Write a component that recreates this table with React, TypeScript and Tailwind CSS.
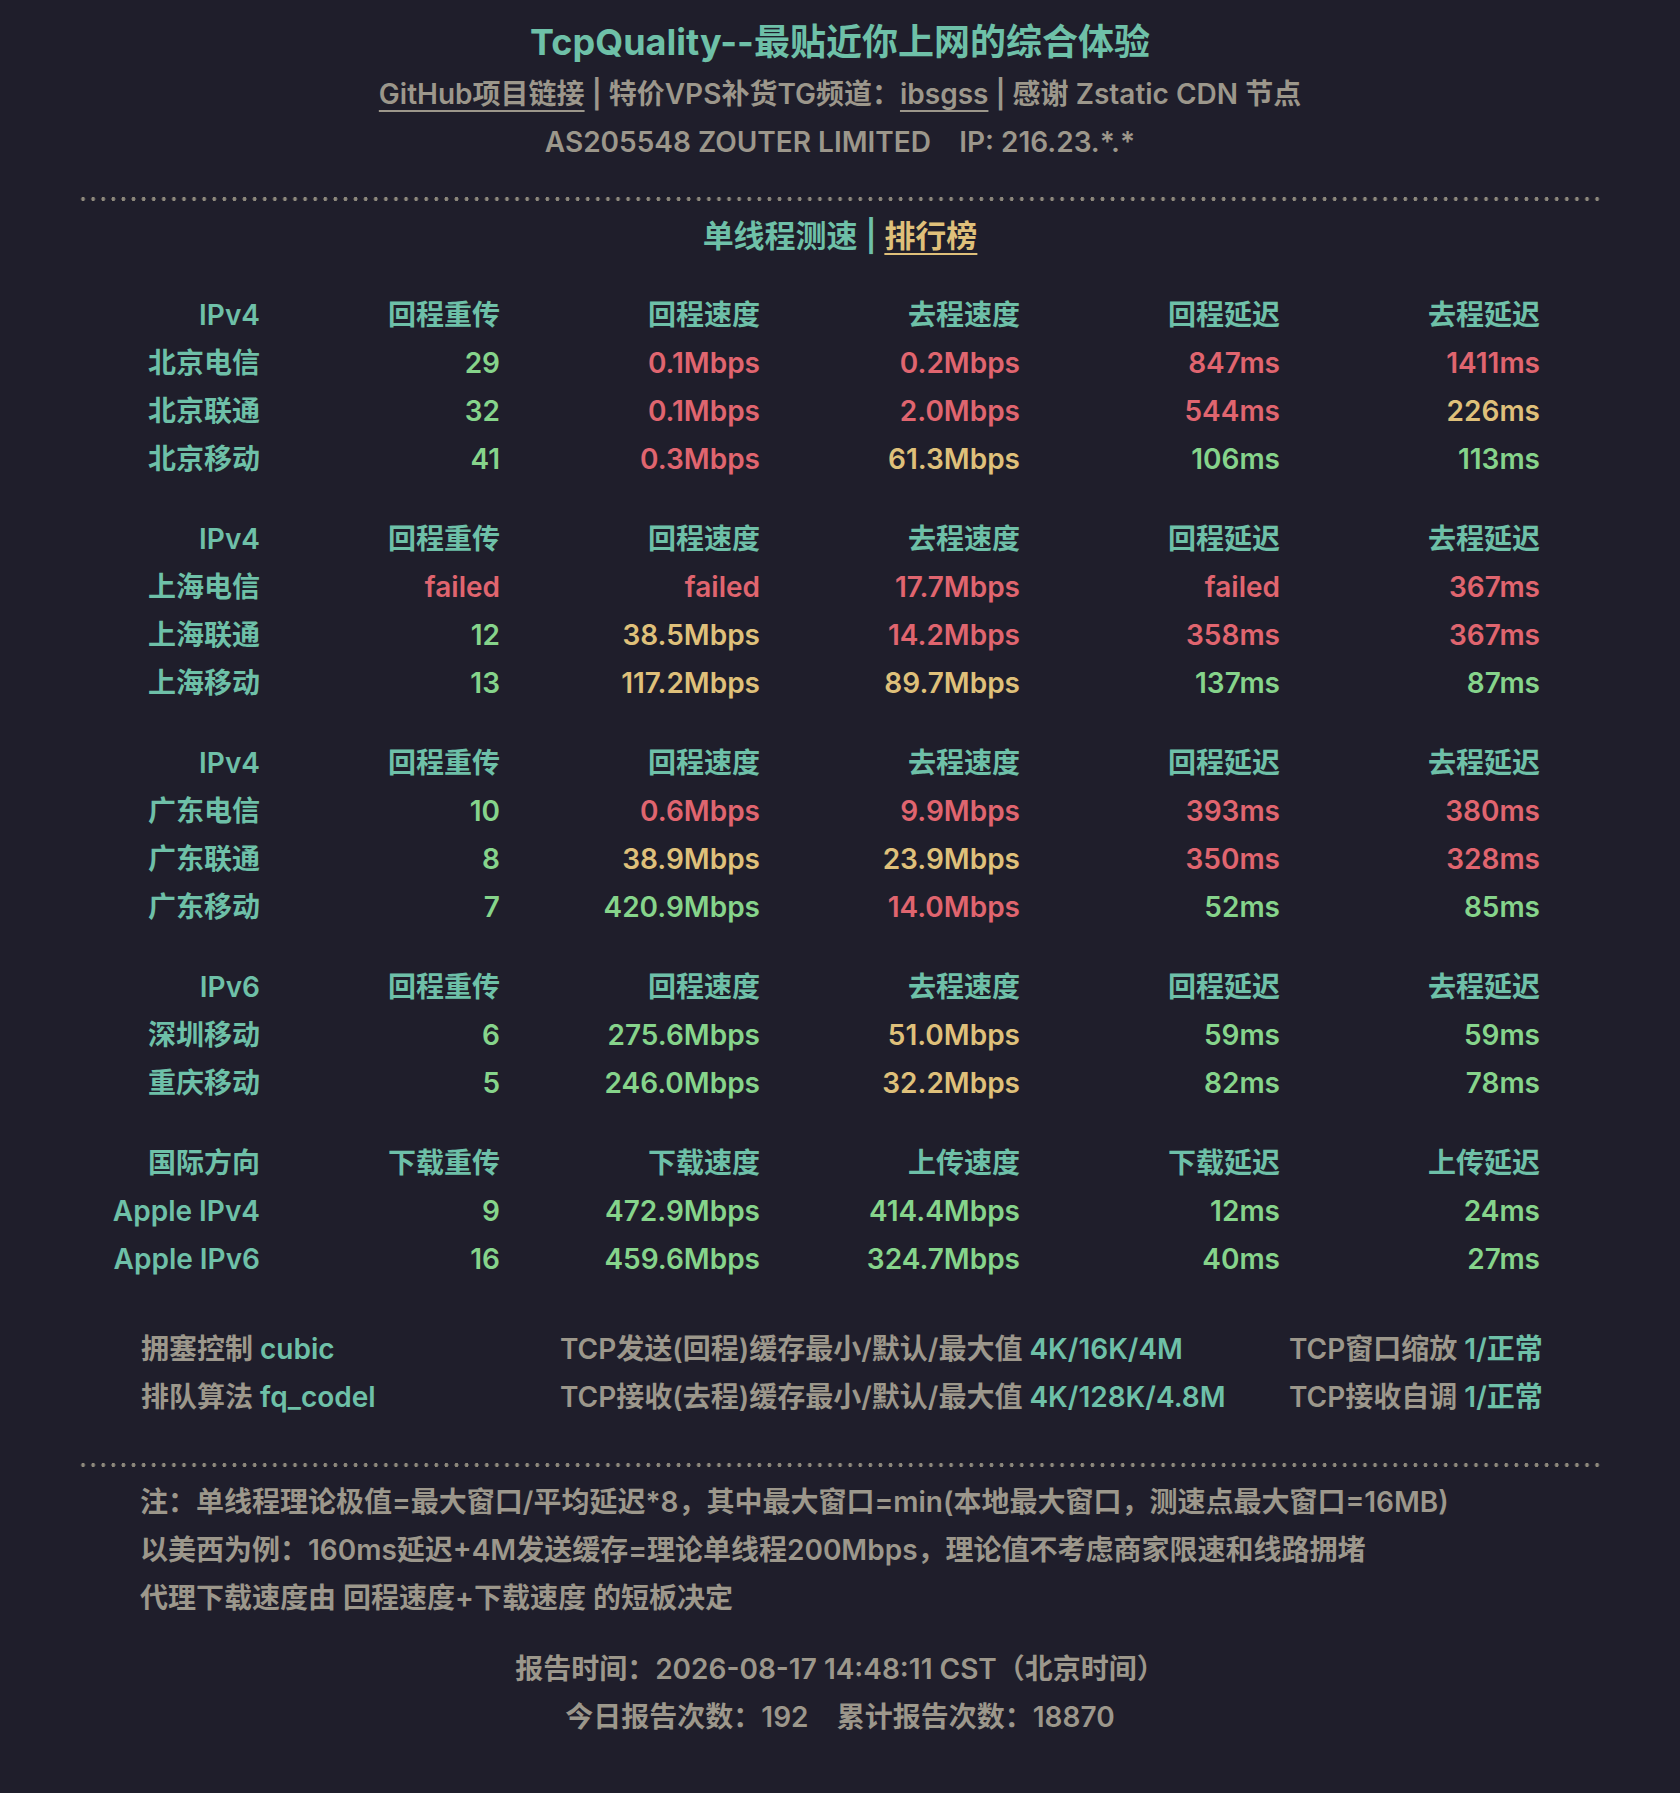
import React from 'react'

type Tone = 'g' | 'r' | 'y'

const tone: Record<Tone, string> = {
  g: 'text-[#86d48b]',
  r: 'text-[#e0656f]',
  y: 'text-[#dfc07a]',
}

type Row = { name: string; cells: [string, Tone][] }
type Group = { head: string[]; rows: Row[] }

const groups: Group[] = [
  {
    head: ['IPv4', '回程重传', '回程速度', '去程速度', '回程延迟', '去程延迟'],
    rows: [
      { name: '北京电信', cells: [['29', 'g'], ['0.1Mbps', 'r'], ['0.2Mbps', 'r'], ['847ms', 'r'], ['1411ms', 'r']] },
      { name: '北京联通', cells: [['32', 'g'], ['0.1Mbps', 'r'], ['2.0Mbps', 'r'], ['544ms', 'r'], ['226ms', 'y']] },
      { name: '北京移动', cells: [['41', 'g'], ['0.3Mbps', 'r'], ['61.3Mbps', 'y'], ['106ms', 'g'], ['113ms', 'g']] },
    ],
  },
  {
    head: ['IPv4', '回程重传', '回程速度', '去程速度', '回程延迟', '去程延迟'],
    rows: [
      { name: '上海电信', cells: [['failed', 'r'], ['failed', 'r'], ['17.7Mbps', 'r'], ['failed', 'r'], ['367ms', 'r']] },
      { name: '上海联通', cells: [['12', 'g'], ['38.5Mbps', 'y'], ['14.2Mbps', 'r'], ['358ms', 'r'], ['367ms', 'r']] },
      { name: '上海移动', cells: [['13', 'g'], ['117.2Mbps', 'y'], ['89.7Mbps', 'y'], ['137ms', 'g'], ['87ms', 'g']] },
    ],
  },
  {
    head: ['IPv4', '回程重传', '回程速度', '去程速度', '回程延迟', '去程延迟'],
    rows: [
      { name: '广东电信', cells: [['10', 'g'], ['0.6Mbps', 'r'], ['9.9Mbps', 'r'], ['393ms', 'r'], ['380ms', 'r']] },
      { name: '广东联通', cells: [['8', 'g'], ['38.9Mbps', 'y'], ['23.9Mbps', 'y'], ['350ms', 'r'], ['328ms', 'r']] },
      { name: '广东移动', cells: [['7', 'g'], ['420.9Mbps', 'g'], ['14.0Mbps', 'r'], ['52ms', 'g'], ['85ms', 'g']] },
    ],
  },
  {
    head: ['IPv6', '回程重传', '回程速度', '去程速度', '回程延迟', '去程延迟'],
    rows: [
      { name: '深圳移动', cells: [['6', 'g'], ['275.6Mbps', 'g'], ['51.0Mbps', 'y'], ['59ms', 'g'], ['59ms', 'g']] },
      { name: '重庆移动', cells: [['5', 'g'], ['246.0Mbps', 'g'], ['32.2Mbps', 'y'], ['82ms', 'g'], ['78ms', 'g']] },
    ],
  },
  {
    head: ['国际方向', '下载重传', '下载速度', '上传速度', '下载延迟', '上传延迟'],
    rows: [
      { name: 'Apple IPv4', cells: [['9', 'g'], ['472.9Mbps', 'g'], ['414.4Mbps', 'g'], ['12ms', 'g'], ['24ms', 'g']] },
      { name: 'Apple IPv6', cells: [['16', 'g'], ['459.6Mbps', 'g'], ['324.7Mbps', 'g'], ['40ms', 'g'], ['27ms', 'g']] },
    ],
  },
]

const cols = 'grid grid-cols-[260px_240px_260px_260px_260px_260px]'

function Dots() {
  return (
    <div className="mx-auto h-[4px] w-[1524px] bg-[radial-gradient(circle,#8d887c_1.8px,transparent_2px)] bg-[length:10.1px_4px]" />
  )
}

export default function App() {
  return (
    <div className="min-h-[1793px] w-[1680px] bg-[#1f1e2b] font-['Inter','Noto_Sans_CJK_SC',sans-serif] text-[28px] font-semibold leading-[48px] text-[#9c978b]">
      <div className="pt-[17px] text-center">
        <h1 className="text-[36px] font-bold leading-[50px] text-[#6ec0a8]">TcpQuality--最贴近你上网的综合体验</h1>
        <div className="mt-[3px]">
          <span className="underline decoration-2 underline-offset-[6px]">GitHub项目链接</span>
          <span> | 特价VPS补货TG频道：</span>
          <span className="underline decoration-2 underline-offset-[6px]">ibsgss</span>
          <span> | 感谢 Zstatic CDN 节点</span>
        </div>
        <div>AS205548 ZOUTER LIMITED&nbsp;&nbsp;&nbsp; IP: 216.23.*.*</div>
      </div>

      <div className="mt-[31px]">
        <Dots />
      </div>

      <div className="mt-[11px] text-center text-[31px]">
        <span className="text-[#6ec0a8]">单线程测速 | </span>
        <span className="text-[#dfc07a] underline decoration-2 underline-offset-[6px]">排行榜</span>
      </div>

      <div className="mt-[31px] flex flex-col gap-[32px]">
        {groups.map((g, gi) => (
          <div key={gi}>
            <div className={`${cols} text-right text-[#6ec0a8]`}>
              {g.head.map((h, i) => (
                <div key={i}>{h}</div>
              ))}
            </div>
            {g.rows.map((r) => (
              <div key={r.name} className={`${cols} text-right`}>
                <div className="text-[#6ec0a8]">{r.name}</div>
                {r.cells.map(([v, t], i) => (
                  <div key={i} className={tone[t]}>{v}</div>
                ))}
              </div>
            ))}
          </div>
        ))}
      </div>

      <div className="mt-[42px] grid grid-cols-[419px_729px_auto] pl-[141px]">
        <div>拥塞控制 <span className="text-[#6ec0a8]">cubic</span></div>
        <div>TCP发送(回程)缓存最小/默认/最大值 <span className="text-[#6ec0a8]">4K/16K/4M</span></div>
        <div>TCP窗口缩放 <span className="text-[#6ec0a8]">1/正常</span></div>
        <div>排队算法 <span className="text-[#6ec0a8]">fq_codel</span></div>
        <div>TCP接收(去程)缓存最小/默认/最大值 <span className="text-[#6ec0a8]">4K/128K/4.8M</span></div>
        <div>TCP接收自调 <span className="text-[#6ec0a8]">1/正常</span></div>
      </div>

      <div className="mt-[42px]">
        <Dots />
      </div>

      <div className="mt-[11px] pl-[140px]">
        <div>注：单线程理论极值=最大窗口/平均延迟*8，其中最大窗口=min(本地最大窗口，测速点最大窗口=16MB)</div>
        <div>以美西为例：160ms延迟+4M发送缓存=理论单线程200Mbps，理论值不考虑商家限速和线路拥堵</div>
        <div>代理下载速度由 回程速度+下载速度 的短板决定</div>
      </div>

      <div className="mt-[23px] text-center">
        <div>报告时间：2026-08-17 14:48:11 CST（北京时间）</div>
        <div>今日报告次数：192&nbsp;&nbsp;&nbsp; 累计报告次数：18870</div>
      </div>
    </div>
  )
}
